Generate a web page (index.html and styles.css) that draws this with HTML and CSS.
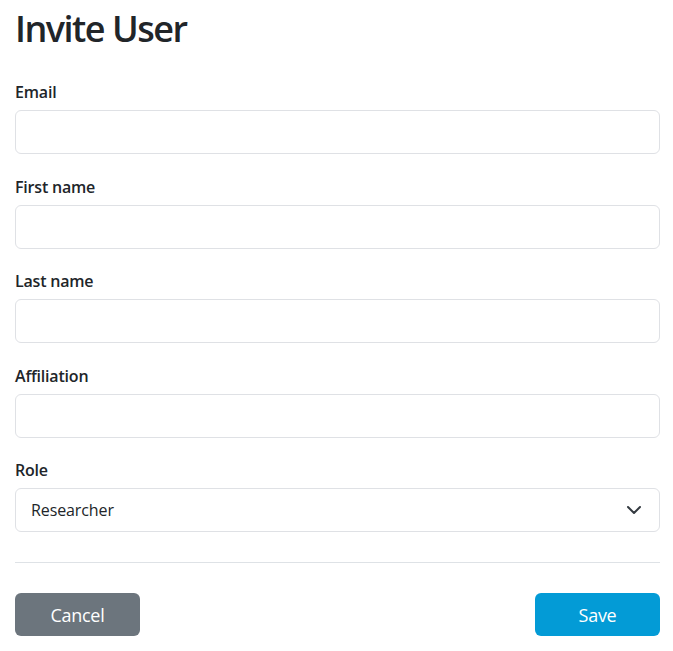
FILE: index.html
```html
<!DOCTYPE html>
<html lang="en">
<head>
<meta charset="utf-8">
<title>Invite User</title>
<link rel="stylesheet" href="styles.css">
</head>
<body>
<main class="page">
  <h1 class="title">Invite User</h1>
  <form class="form">
    <div class="field">
      <label class="label" for="email">Email</label>
      <input class="control" id="email" type="email">
    </div>
    <div class="field">
      <label class="label" for="first">First name</label>
      <input class="control" id="first" type="text">
    </div>
    <div class="field">
      <label class="label" for="last">Last name</label>
      <input class="control" id="last" type="text">
    </div>
    <div class="field">
      <label class="label" for="aff">Affiliation</label>
      <input class="control" id="aff" type="text">
    </div>
    <div class="field">
      <label class="label" for="role">Role</label>
      <div class="select-wrap">
        <select class="control select" id="role">
          <option>Researcher</option>
        </select>
        <svg class="chevron" width="16" height="16" viewBox="0 0 16 16" aria-hidden="true">
          <path d="M2 5l6 6 6-6" fill="none" stroke="#343a40" stroke-width="2" stroke-linecap="round" stroke-linejoin="round"/>
        </svg>
      </div>
    </div>
    <hr class="divider">
    <div class="actions">
      <button type="button" class="btn btn-cancel">Cancel</button>
      <button type="button" class="btn btn-save">Save</button>
    </div>
  </form>
</main>
</body>
</html>
```

FILE: styles.css
```css
* { box-sizing: border-box; }
html, body { margin: 0; padding: 0; background: #fff; }
body {
  font-family: "Open Sans", "Noto Sans", "Liberation Sans", sans-serif;
  color: #212529;
}
.page {
  padding: 0 13px 0 15px;
}
.title {
  margin: 0;
  padding-top: 5px;
  font-size: 36px;
  line-height: 48px;
  font-weight: 600;
  letter-spacing: -1.5px;
}
.form {
  margin-top: 27px;
}
.field {
  margin-bottom: 20.5px;
}
.label {
  display: block;
  font-size: 16px;
  line-height: 24px;
  font-weight: 600;
  letter-spacing: -0.2px;
  margin-bottom: 6px;
}
.control {
  display: block;
  width: 100%;
  height: 44px;
  margin: 0;
  padding: 0 15px;
  font-family: inherit;
  font-size: 16px;
  color: #212529;
  background: #fff;
  border: 1px solid #dfe1e5;
  border-radius: 6px;
  outline: none;
}
.select-wrap { position: relative; }
.select {
  appearance: none;
  -webkit-appearance: none;
  letter-spacing: -0.1px;
}
.chevron {
  position: absolute;
  right: 18px;
  top: 14px;
  pointer-events: none;
}
.divider {
  border: 0;
  border-top: 1px solid #dee2e6;
  margin: 30px 0 30px;
}
.actions {
  display: flex;
  justify-content: space-between;
}
.btn {
  width: 125px;
  height: 43px;
  border: 0;
  border-radius: 6px;
  font-family: inherit;
  font-size: 18px;
  color: #fff;
  letter-spacing: -0.3px;
}
.btn-cancel { background: #6c757d; }
.btn-save { background: #039bd6; }
```
